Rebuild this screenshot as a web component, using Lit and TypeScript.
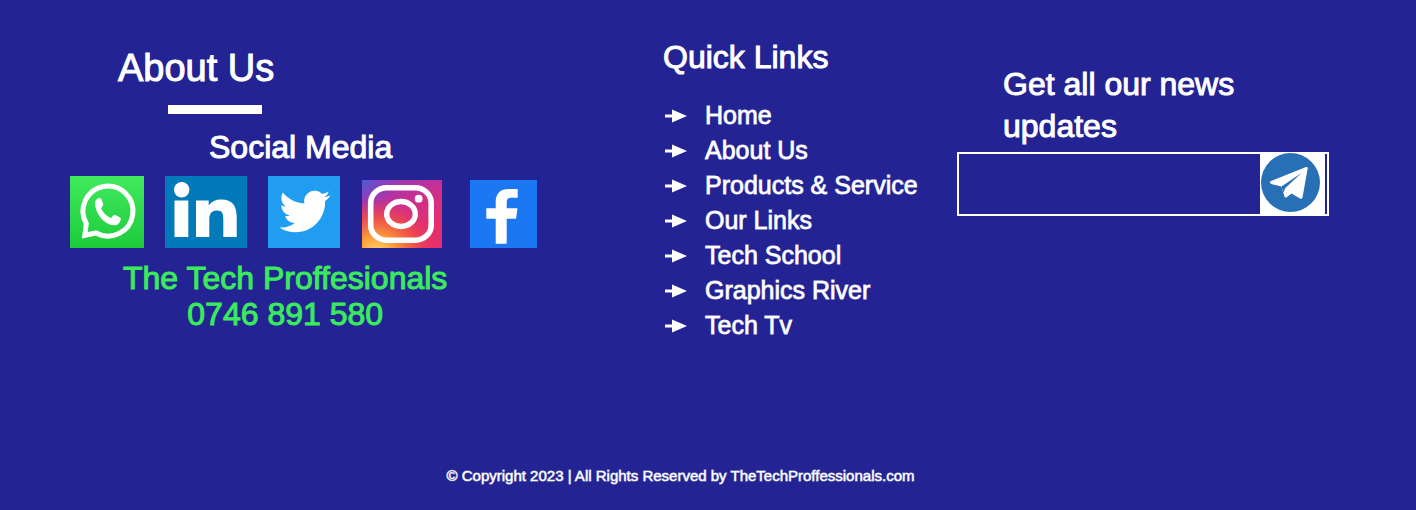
import { LitElement, html, css, svg } from "lit";
import { customElement } from "lit/decorators.js";

const LINKS = [
  "Home",
  "About Us",
  "Products & Service",
  "Our Links",
  "Tech School",
  "Graphics River",
  "Tech Tv",
];

const SOCIALS = [
  {
    name: "WhatsApp",
    width: 74,
    height: 72,
    art: svg`
      <defs><linearGradient id="wa" x1="0" y1="0" x2="0" y2="1"><stop offset="0" stop-color="#40ea5e"/><stop offset="1" stop-color="#1dcb3b"/></linearGradient></defs>
      <rect width="74" height="72" fill="url(#wa)"/>
      <path d="M16.300 47.500A25 25 0 1 1 26 57L14.800 59.300Z" fill="none" stroke="#fff" stroke-width="5"/>
      <path d="M25 27C25 24 28 21.500 30 22Q31 22 31.500 23.500L33.300 28.500Q33.500 29.500 31 32.300Q34 39 41 42.300L43.500 39.300Q44.300 38.500 45.500 39L50 41.500Q51 42 50.700 43.500C50 47.500 47 49.500 44 49.300C35 49 25 38 25 27Z" fill="#fff"/>`,
  },
  {
    name: "LinkedIn",
    width: 82,
    height: 72,
    art: svg`
      <rect width="82" height="72" fill="#0279b8"/>
      <circle cx="16.700" cy="13.700" r="7.700" fill="#fff"/>
      <path d="M9.500 24.500H23.300V61H9.500ZM31 24.500H43.700V29.500Q48 23.600 56 23.600C68 23.600 71.700 30 71.700 41.500V61H58.300V43.500C58.300 38 57.500 34.600 52 34.600C46 34.600 44.300 38.500 44.300 43.500V61H31Z" fill="#fff"/>`,
  },
  {
    name: "Twitter",
    width: 72,
    height: 72,
    art: svg`
      <rect width="72" height="72" fill="#209cf0"/>
      <path transform="translate(11.300 9.900) scale(2.125)" fill="#fff" d="M23.953 4.57a10 10 0 01-2.825.775 4.958 4.958 0 002.163-2.723c-.951.555-2.005.959-3.127 1.184a4.92 4.92 0 00-8.384 4.482C7.69 8.095 4.067 6.13 1.64 3.162a4.822 4.822 0 00-.666 2.475c0 1.71.87 3.213 2.188 4.096a4.904 4.904 0 01-2.228-.616v.06a4.923 4.923 0 003.946 4.827 4.996 4.996 0 01-2.212.085 4.936 4.936 0 004.604 3.417 9.867 9.867 0 01-6.102 2.105c-.39 0-.779-.023-1.17-.067a13.995 13.995 0 007.557 2.209c9.053 0 13.998-7.496 13.998-13.985 0-.21 0-.42-.015-.63A9.935 9.935 0 0024 4.59z"/>`,
  },
  {
    name: "Instagram",
    width: 80,
    height: 68,
    art: svg`
      <defs>
        <linearGradient id="ig" x1="0.200" y1="0" x2="0.600" y2="0.800"><stop offset="0" stop-color="#8a3cc0"/><stop offset="0.500" stop-color="#cc2f8e"/><stop offset="1" stop-color="#e42f6e"/></linearGradient>
        <radialGradient id="igwarm" cx="0.180" cy="1.050" r="0.800"><stop offset="0" stop-color="#ffd568"/><stop offset="0.300" stop-color="#fb9a3a"/><stop offset="0.620" stop-color="#f2553f" stop-opacity="0.800"/><stop offset="1" stop-color="#e62e6a" stop-opacity="0"/></radialGradient>
        <radialGradient id="igcool" cx="0" cy="0" r="0.450"><stop offset="0" stop-color="#4f5bd5"/><stop offset="1" stop-color="#8a3cc0" stop-opacity="0"/></radialGradient>
      </defs>
      <rect width="80" height="68" fill="url(#ig)"/>
      <rect width="80" height="68" fill="url(#igwarm)"/>
      <rect width="80" height="68" fill="url(#igcool)"/>
      <rect x="8.700" y="7.800" width="60.500" height="52.400" rx="16" ry="15" fill="none" stroke="#fff" stroke-width="5.600"/>
      <ellipse cx="39" cy="34" rx="14.300" ry="12.500" fill="none" stroke="#fff" stroke-width="5.400"/>
      <circle cx="56.700" cy="18.700" r="3.900" fill="#fff"/>`,
  },
  {
    name: "Facebook",
    width: 67,
    height: 68,
    art: svg`
      <rect width="67" height="68" fill="#1b78f2"/>
      <path d="M25.700 63.700V38.700H16.300V28.300H25.700V22C25.700 13.500 30.500 9 38.500 9H47.700V17.700H41.500C38 17.700 36.700 19.500 36.700 22.500V28.300H47.500L46 38.700H36.700V63.700Z" fill="#fff"/>`,
  },
];

@customElement("app-root")
export class AppRoot extends LitElement {
  static styles = css`
    :host {
      display: block;
    }
    * {
      box-sizing: border-box;
    }
    .page {
      display: flex;
      flex-direction: column;
      min-height: 100vh;
      background: #232393;
      color: #fff;
      font-family: "Liberation Sans", Arial, sans-serif;
      -webkit-text-stroke: 1px currentColor;
    }
    .columns {
      display: grid;
      grid-template-columns: 593fr 294fr 372fr;
      padding: 0 87px 24px 70px;
    }
    h2,
    h3,
    p {
      margin: 0;
      font-weight: 400;
    }
    h3 {
      font-size: 32px;
      line-height: 36px;
    }
    a {
      color: inherit;
      text-decoration: none;
    }
    .about,
    .quick,
    .news {
      min-width: 0;
    }
    .about {
      padding-top: 46px;
    }
    .title {
      margin-left: 48px;
      font-size: 38px;
      line-height: 44px;
    }
    .rule {
      width: 94px;
      height: 9px;
      margin: 15px 0 15px 98px;
      border: 0;
      background: #fff;
    }
    .social-title {
      margin-left: 139px;
    }
    .socials {
      display: flex;
      align-items: flex-end;
      gap: 21px;
      margin-top: 11px;
    }
    .social svg {
      display: block;
    }
    .social.instagram {
      margin: 0 7px 0 1px;
    }
    .contact {
      width: fit-content;
      margin: 12px 0 0 53px;
      color: #3bea5d;
      font-size: 32px;
      line-height: 36px;
      text-align: center;
    }
    .quick {
      padding-top: 39px;
    }
    .links {
      margin: 23px 0 0;
      padding: 0;
      list-style: none;
      font-size: 25px;
      line-height: 35px;
      white-space: nowrap;
      -webkit-text-stroke-color: rgba(255, 255, 255, 0.8);
    }
    .link {
      display: flex;
      align-items: center;
      gap: 18px;
      margin-left: 2px;
    }
    .news {
      padding-top: 63px;
    }
    .news-title {
      display: block;
      padding: 0 46px;
      font-size: 32px;
      line-height: 42px;
    }
    .signup {
      display: flex;
      height: 64px;
      margin-top: 5px;
      padding-right: 2px;
      border: 2px solid #fff;
    }
    .email {
      flex: 1;
      min-width: 0;
      padding: 0 12px;
      border: 0;
      outline: 0;
      background: transparent;
      color: inherit;
      font: inherit;
      font-size: 25px;
    }
    .send {
      width: 65px;
      padding: 0;
      border: 0;
      background: #fff;
      cursor: pointer;
    }
    .send svg {
      display: block;
      overflow: visible;
    }
    .copyright {
      margin-top: auto;
      padding: 0 55px 24px 0;
      font-size: 15px;
      line-height: 20px;
      text-align: center;
      -webkit-text-stroke-color: rgba(255, 255, 255, 0.6);
    }
  `;

  render() {
    return html`
      <footer class="page">
        <div class="columns">
          <section class="about">
            <h2 class="title">About Us</h2>
            <hr class="rule" />
            <h3 class="social-title">Social Media</h3>
            <div class="socials">
              ${SOCIALS.map(
                (s) => html`<a class="social ${s.name.toLowerCase()}" href="#" aria-label=${s.name}>
                  <svg width=${s.width} height=${s.height} viewBox="0 0 ${s.width} ${s.height}" aria-hidden="true">${s.art}</svg>
                </a>`
              )}
            </div>
            <p class="contact">The Tech Proffesionals<br />0746 891 580</p>
          </section>
          <nav class="quick">
            <h3>Quick Links</h3>
            <ul class="links">
              ${LINKS.map(
                (label) => html`<li>
                  <a class="link" href="#"
                    ><svg width="22" height="14" viewBox="0 0 22 14" aria-hidden="true">
                      <path d="M0 5.400H7V0.500L22 7L7 13.500V8.400H0Z" fill="#fff" />
                    </svg>
                    <span>${label}</span></a
                  >
                </li>`
              )}
            </ul>
          </nav>
          <section class="news">
            <label class="news-title" for="email">Get all our news updates</label>
            <form class="signup" @submit=${(e: Event) => e.preventDefault()}>
              <input class="email" id="email" type="email" />
              <button class="send" type="submit" aria-label="Send">
                <svg width="65" height="60" viewBox="0 0 65 60" aria-hidden="true">
                  <circle cx="30.500" cy="28.500" r="29.500" fill="#2770b5" />
                  <path d="M10 28.500Q9.500 27.500 11 27L46 13Q48 12.500 47.700 14.500L42.500 43.500Q42 45.500 40 44.500L31.500 39.500L27 43Q24.800 44.500 24.300 42L21.500 32.500L11 30Z" fill="#fff" />
                  <path d="M41.500 19L21.500 32.500L23.500 38.500L25.300 34Z" fill="#2770b5" />
                </svg>
              </button>
            </form>
          </section>
        </div>
        <p class="copyright">© Copyright 2023 | All Rights Reserved by TheTechProffessionals.com</p>
      </footer>
    `;
  }
}
